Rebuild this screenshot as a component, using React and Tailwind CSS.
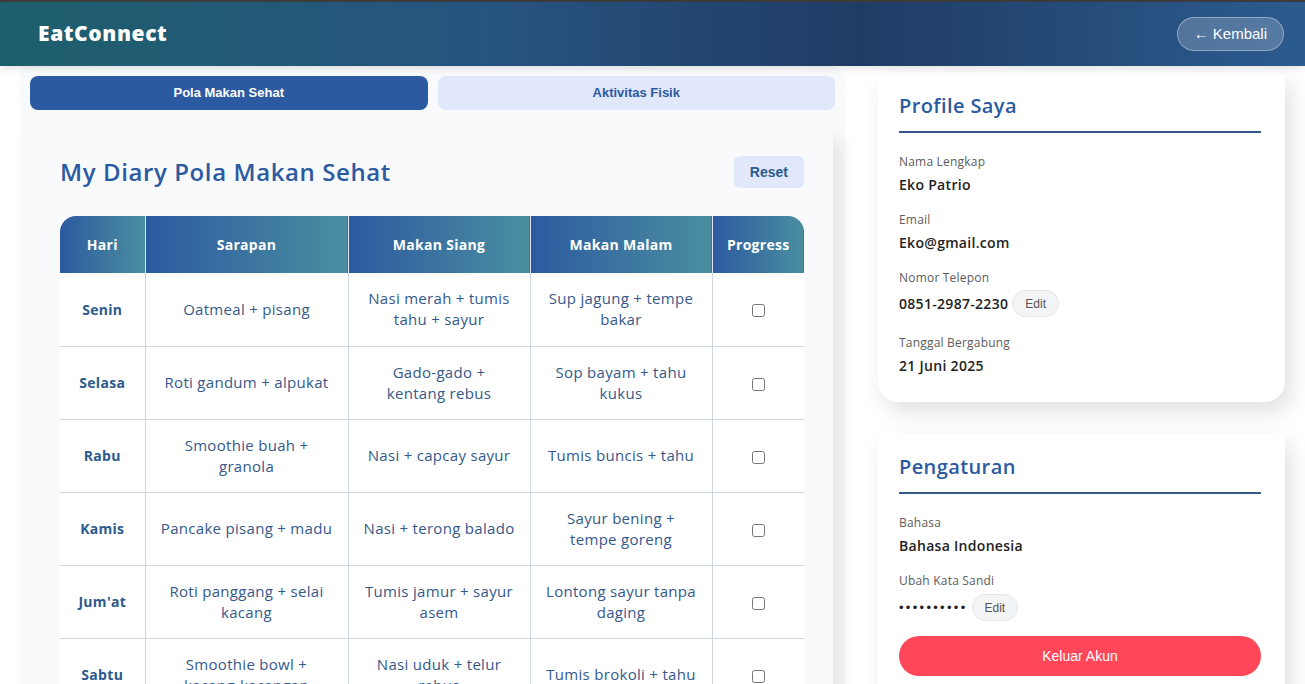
import { useState } from 'react'

const MEALS = [
  { day: 'Senin', sarapan: 'Oatmeal + pisang', siang: 'Nasi merah + tumis tahu + sayur', malam: 'Sup jagung + tempe bakar' },
  { day: 'Selasa', sarapan: 'Roti gandum + alpukat', siang: 'Gado-gado + kentang rebus', malam: 'Sop bayam + tahu kukus' },
  { day: 'Rabu', sarapan: 'Smoothie buah + granola', siang: 'Nasi + capcay sayur', malam: 'Tumis buncis + tahu' },
  { day: 'Kamis', sarapan: 'Pancake pisang + madu', siang: 'Nasi + terong balado', malam: 'Sayur bening + tempe goreng' },
  { day: "Jum'at", sarapan: 'Roti panggang + selai kacang', siang: 'Tumis jamur + sayur asem', malam: 'Lontong sayur tanpa daging' },
  { day: 'Sabtu', sarapan: 'Smoothie bowl + kacang-kacangan', siang: 'Nasi uduk + telur rebus', malam: 'Tumis brokoli + tahu' },
  { day: 'Minggu', sarapan: 'Nasi goreng sayur', siang: 'Ikan bakar + lalapan', malam: 'Sup ayam + sayuran' },
]

const HEADERS = [
  { label: 'Hari', w: 'w-[85px]' },
  { label: 'Sarapan', w: 'w-[203px]' },
  { label: 'Makan Siang', w: 'w-[182px]' },
  { label: 'Makan Malam', w: 'w-[182px]' },
  { label: 'Progress', w: 'w-[92px]' },
]

// ── Small pieces ─────────────────────────────────────────────────────────────

function EditButton() {
  return (
    <button className="h-[27px] px-[12px] rounded-full bg-[#f3f4f6] border border-[#e2e5ea] text-[12px] text-[#555] font-['Liberation_Sans',Arial,sans-serif]">
      Edit
    </button>
  )
}

function Field({ label, children, gap = 'mb-[16px]' }) {
  return (
    <div className={gap}>
      <div className="text-[12px] leading-[18px] text-[#5c5c5c] mb-[3px] tracking-[0.2px]">{label}</div>
      {children}
    </div>
  )
}

function Value({ children }) {
  return <div className="text-[14px] leading-[21px] font-semibold text-[#222] tracking-[0.3px]">{children}</div>
}

function CardTitle({ children }) {
  return (
    <div className="pb-[10px] border-b-2 border-[#35598c] mb-[20px]">
      <h2 className="text-[20px] leading-[30px] font-semibold text-[#2c5aa0] tracking-[0.4px]">{children}</h2>
    </div>
  )
}

const bodyCell = 'border border-t-0 border-[#cfd6e2] text-center text-[15px] leading-[21px] text-[#35598c] px-[14px] tracking-[0.3px]'

// ── App ──────────────────────────────────────────────────────────────────────

export default function App() {
  const [tab, setTab] = useState('makan')
  const [done, setDone] = useState(() => MEALS.map(() => false))

  return (
    <div className="min-h-screen bg-white font-['Open_Sans',sans-serif]">
      {/* ── Header ── */}
      <header className="h-[66px] border-t-2 border-[#3b3b3b] bg-[linear-gradient(90deg,#1d5f6c_0%,#275380_38%,#1f3c64_66%,#2c5b8f_100%)] flex items-center justify-between pl-[38px] pr-[21px] shadow-[0_2px_8px_rgba(0,0,0,0.12)] relative z-10">
        <h1 className="text-[21px] font-extrabold text-white tracking-[0.6px]">EatConnect</h1>
        <button className="h-[34px] px-[16px] rounded-full bg-white/20 border border-white/35 text-white text-[15px] font-['Liberation_Sans',Arial,sans-serif]">
          ← Kembali
        </button>
      </header>

      <div className="flex items-start">
        {/* ── Left section ── */}
        <section className="ml-[20px] w-[825px] bg-[#f8fafc] rounded-tr-2xl pt-[10px]">
          <div className="grid grid-cols-2 gap-[10px] px-[10px]">
            <button
              onClick={() => setTab('makan')}
              className={[
                'h-[34px] rounded-lg text-[13px] font-bold font-[\'Liberation_Sans\',Arial,sans-serif]',
                tab === 'makan' ? 'bg-[#2c5aa0] text-white' : 'bg-[#e1e8fc] text-[#2c5aa0]',
              ].join(' ')}
            >
              Pola Makan Sehat
            </button>
            <button
              onClick={() => setTab('fisik')}
              className={[
                'h-[34px] rounded-lg text-[13px] font-bold font-[\'Liberation_Sans\',Arial,sans-serif]',
                tab === 'fisik' ? 'bg-[#2c5aa0] text-white' : 'bg-[#e1e8fc] text-[#2c5aa0]',
              ].join(' ')}
            >
              Aktivitas Fisik
            </button>
          </div>

          {/* Diary card */}
          <div className="mt-[18px] w-[813px] bg-[#f8fafc] rounded-tr-xl shadow-[10px_10px_18px_rgba(0,0,0,0.08)] pt-[28px] pl-[40px] pr-[29px] pb-[30px]">
            <div className="flex items-center justify-between h-[32px]">
              <h2 className="text-[24px] font-semibold text-[#2c5aa0] tracking-[0.6px]">My Diary Pola Makan Sehat</h2>
              <button
                onClick={() => setDone(MEALS.map(() => false))}
                className="h-[32px] px-[16px] rounded-md bg-[#e1e8fc] text-[#2c5a8c] text-[14px] font-bold font-['Liberation_Sans',Arial,sans-serif]"
              >
                Reset
              </button>
            </div>

            <div className="mt-[28px] rounded-t-2xl overflow-hidden">
              <table className="w-[744px] border-collapse table-fixed">
                <thead>
                  <tr>
                    {HEADERS.map((h, i) => (
                      <th
                        key={h.label}
                        className={[
                          h.w,
                          'h-[57px] p-0 text-[14px] font-bold text-white tracking-[0.3px] bg-[linear-gradient(90deg,#2c5aa0_0%,#4a8ea0_100%)]',
                          i > 0 ? 'border-l border-[#dfe6ee]' : '',
                        ].join(' ')}
                      >
                        {h.label}
                      </th>
                    ))}
                  </tr>
                </thead>
                <tbody>
                  {MEALS.map((m, idx) => (
                    <tr key={m.day} className="h-[73px] bg-white">
                      <td className="border border-t-0 border-l-0 border-[#cfd6e2] text-center text-[14px] font-bold text-[#2c5a8c] px-[8px] tracking-[0.3px]">
                        {m.day}
                      </td>
                      <td className={bodyCell}>{m.sarapan}</td>
                      <td className={bodyCell}>{m.siang}</td>
                      <td className={bodyCell}>{m.malam}</td>
                      <td className="border border-t-0 border-r-0 border-[#cfd6e2] text-center">
                        <input
                          type="checkbox"
                          checked={done[idx]}
                          onChange={() => setDone((d) => d.map((v, j) => (j === idx ? !v : v)))}
                          className="w-[13px] h-[13px] align-middle"
                        />
                      </td>
                    </tr>
                  ))}
                </tbody>
              </table>
            </div>
          </div>
        </section>

        {/* ── Right column ── */}
        <aside className="ml-[33px] w-[407px] flex flex-col gap-[31px] pt-[6px]">
          <div className="bg-white rounded-b-[20px] rounded-t-md shadow-[6px_10px_22px_rgba(0,0,0,0.12)] pt-[19px] pl-[21px] pr-[24px] pb-[26px]">
            <CardTitle>Profile Saya</CardTitle>
            <Field label="Nama Lengkap">
              <Value>Eko Patrio</Value>
            </Field>
            <Field label="Email">
              <Value>Eko@gmail.com</Value>
            </Field>
            <Field label="Nomor Telepon" gap="mb-[17px]">
              <div className="flex items-center gap-[4px]">
                <Value>0851-2987-2230</Value>
                <EditButton />
              </div>
            </Field>
            <Field label="Tanggal Bergabung" gap="">
              <Value>21 Juni 2025</Value>
            </Field>
          </div>

          <div className="bg-white rounded-t-md shadow-[6px_10px_22px_rgba(0,0,0,0.12)] pt-[19px] pl-[21px] pr-[24px] pb-[26px]">
            <CardTitle>Pengaturan</CardTitle>
            <Field label="Bahasa">
              <Value>Bahasa Indonesia</Value>
            </Field>
            <Field label="Ubah Kata Sandi" gap="mb-[15px]">
              <div className="flex items-center gap-[4px] mt-[4px]">
                <span className="text-[13px] tracking-[2.3px] text-[#222] font-['Liberation_Sans',Arial,sans-serif]">••••••••••</span>
                <EditButton />
              </div>
            </Field>
            <button className="w-full h-[40px] rounded-full bg-[#ff4759] text-white text-[14px] font-['Liberation_Sans',Arial,sans-serif]">
              Keluar Akun
            </button>
          </div>
        </aside>
      </div>
    </div>
  )
}
